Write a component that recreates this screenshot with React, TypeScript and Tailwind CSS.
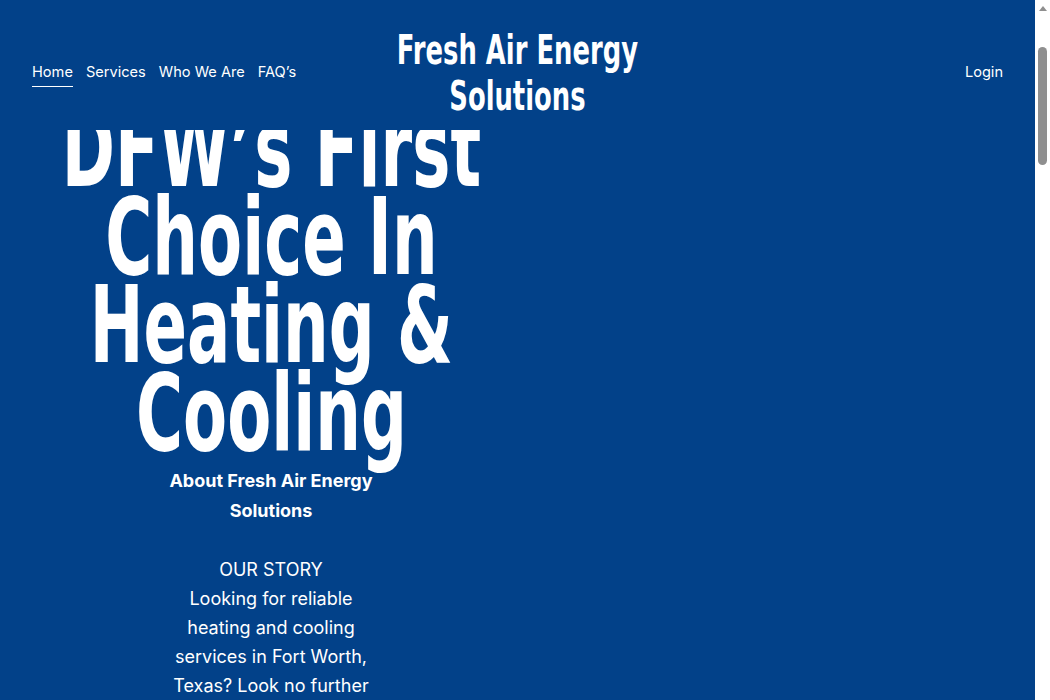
import React from 'react';

const navLinks = ['Home', 'Services', 'Who We Are', "FAQ’s"];

// no condensed display face installed, so squeeze DejaVu Sans Bold horizontally
const display = { fontFamily: '"DejaVu Sans", "Liberation Sans", sans-serif' };

const Header = () => (
  <header className="fixed top-0 left-0 right-[15px] z-10 bg-[#024189] h-[130px] pt-[16px] flex items-center justify-between px-8">
    <nav className="flex items-center gap-[13px] text-[14.6px] text-white w-[300px]">
      {navLinks.map((link, i) => (
        <a
          key={link}
          href="#"
          className={i === 0 ? 'border-b border-white pb-[2px] mt-[3px]' : ''}
        >
          {link}
        </a>
      ))}
    </nav>
    <div className="w-[300px] flex justify-center">
      <div
        className="text-white font-bold text-[41px] leading-[46px] text-center whitespace-nowrap scale-x-[0.63] origin-center"
        style={display}
      >
        Fresh Air Energy
        <br />
        Solutions
      </div>
    </div>
    <div className="w-[300px] flex justify-end">
      <a href="#" className="text-[14.6px] text-white">Login</a>
    </div>
  </header>
);

const Scrollbar = () => (
  <div className="fixed top-0 right-0 bottom-0 w-[15px] bg-white z-20">
    <div className="mx-auto mt-[6px] w-0 h-0 border-l-[4px] border-r-[4px] border-b-[5px] border-l-transparent border-r-transparent border-b-[#8f8f8f]" />
    <div className="absolute top-[47px] left-[3px] w-[9px] h-[118px] rounded-full bg-[#8f8f8f]" />
  </div>
);

export default function App() {
  return (
    <div
      className="min-h-screen bg-[#024189] text-white pr-[15px]"
      style={{ fontFamily: 'Inter, "Noto Sans", sans-serif' }}
    >
      <Header />
      <Scrollbar />
      <main className="pt-[105px] pb-40">
        <div className="w-[542px] flex flex-col items-center">
          <h1
            className="font-bold text-[107px] leading-[88px] text-center whitespace-nowrap scale-x-[0.6] origin-center"
            style={display}
          >
            DFW’s First
            <br />
            Choice In
            <br />
            Heating &amp;
            <br />
            Cooling
          </h1>
          <div className="w-[215px] text-center text-[18px] leading-[29px] mt-[9px]">
            <h2 className="font-bold leading-[30px]">About Fresh Air Energy Solutions</h2>
            <p className="mt-[29px]">OUR STORY</p>
            <p>
              Looking for reliable heating and cooling services in Fort Worth, Texas? Look no further
              than Fresh Air Energy Solutions. We are a locally owned and operated HVAC company
              dedicated to keeping your home comfortable all year long, with honest pricing and
              friendly, professional technicians.
            </p>
          </div>
        </div>
        <div className="h-[2600px]" />
      </main>
    </div>
  );
}
